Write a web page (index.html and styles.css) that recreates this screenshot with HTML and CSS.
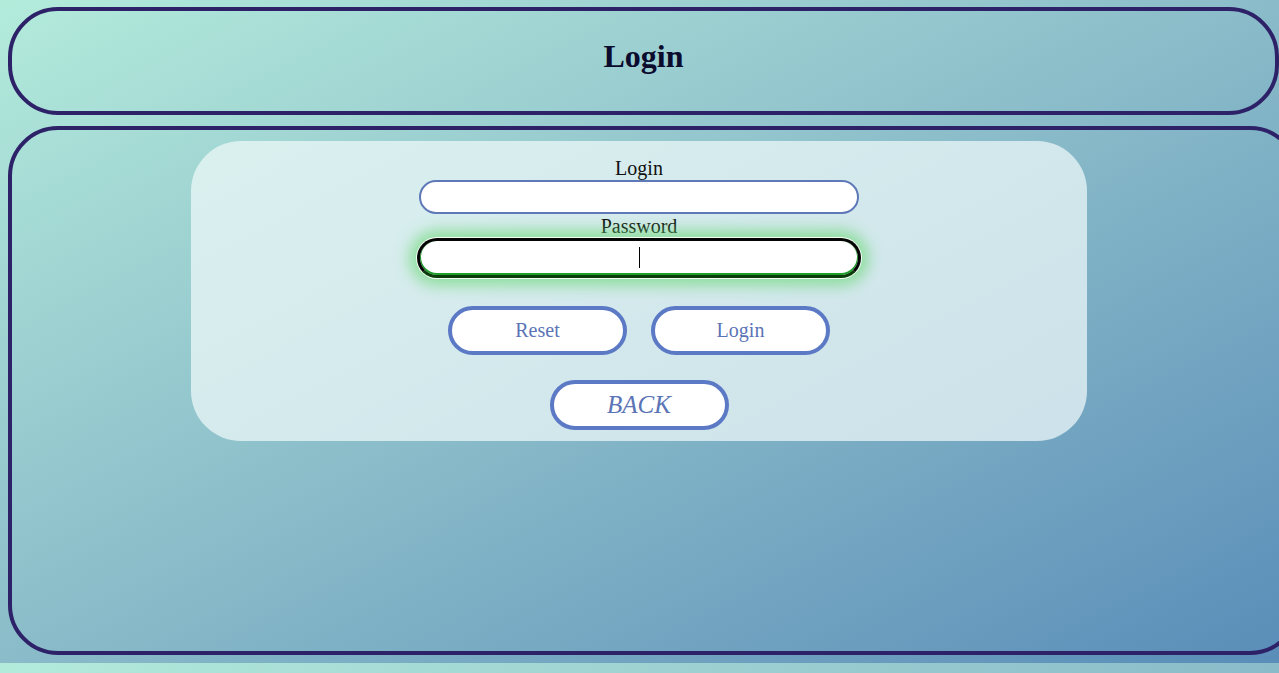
FILE: index.html
```html
<!DOCTYPE html>
<html lang="en">
<head>
<meta charset="utf-8">
<title>Login</title>
<link rel="stylesheet" href="styles.css">
</head>
<body>
  <header class="top">
    <h1 class="title">Login</h1>
  </header>
  <main class="main">
    <form class="card">
      <label class="label" for="login">Login</label>
      <input class="input" id="login" type="text">
      <label class="label" for="pass">Password</label>
      <div class="focus-wrap">
        <input class="input input-focus" id="pass" type="password">
        <span class="caret"></span>
      </div>
      <div class="actions">
        <button class="btn" type="button">Reset</button>
        <button class="btn" type="button">Login</button>
      </div>
      <button class="btn btn-back" type="button">BACK</button>
    </form>
  </main>
</body>
</html>
```
FILE: styles.css
```css
html {
  overflow: hidden;
}
body {
  margin: 0;
  padding: 7px 0 8px 8px;
  font-family: "Liberation Serif", "Times New Roman", serif;
  background: linear-gradient(to bottom right, #b3ebdb 0%, #8ec0cb 45%, #5a8db8 100%);
}
.top {
  box-sizing: border-box;
  width: 1271px;
  height: 108px;
  border: 4px solid #2d2168;
  border-radius: 50px;
  display: flex;
  align-items: center;
  justify-content: center;
}
.title {
  margin: 0;
  font-size: 32px;
  font-weight: bold;
  color: #0b0b2e;
  position: relative;
  top: -5px;
}
.main {
  box-sizing: border-box;
  margin-top: 11px;
  width: 1292px;
  height: 529px;
  border: 4px solid #2d2168;
  border-radius: 50px;
  padding: 11px 0 0 179px;
}
.card {
  box-sizing: border-box;
  width: 896px;
  height: 300px;
  border-radius: 50px;
  background: rgba(240, 250, 250, 0.72);
  padding-top: 16px;
  display: flex;
  flex-direction: column;
  align-items: center;
}
.label {
  font-size: 20px;
  line-height: 23px;
  color: #111;
}
.input {
  box-sizing: border-box;
  width: 440px;
  height: 34px;
  border: 2px solid #5f78b8;
  border-radius: 17px;
  background: #fff;
  outline: none;
  margin: 0 0 1px 0;
}
.focus-wrap {
  position: relative;
  width: 444px;
  height: 40px;
}
.input-focus {
  width: 444px;
  height: 40px;
  margin: 0;
  border: 3px solid #050505;
  border-bottom-color: #0a3d0a;
  border-radius: 20px;
  box-shadow: inset 0 -1px 0 1px #1e9e2a, 0 0 0 1px #f4fff4, 0 0 14px 8px rgba(100, 215, 110, 0.6);
}
.caret {
  position: absolute;
  left: 222px;
  top: 9px;
  width: 1px;
  height: 21px;
  background: #000;
}
.actions {
  display: flex;
  gap: 24px;
  margin-top: 28px;
}
.btn {
  box-sizing: border-box;
  width: 179px;
  height: 49px;
  border: 4px solid #5b79c5;
  border-radius: 25px;
  background: #fff;
  color: #5b74b6;
  font-family: "Liberation Serif", "Times New Roman", serif;
  font-size: 20px;
  padding: 0;
}
.btn-back {
  margin-top: 25px;
  height: 50px;
  font-size: 25px;
  font-style: italic;
}
```
